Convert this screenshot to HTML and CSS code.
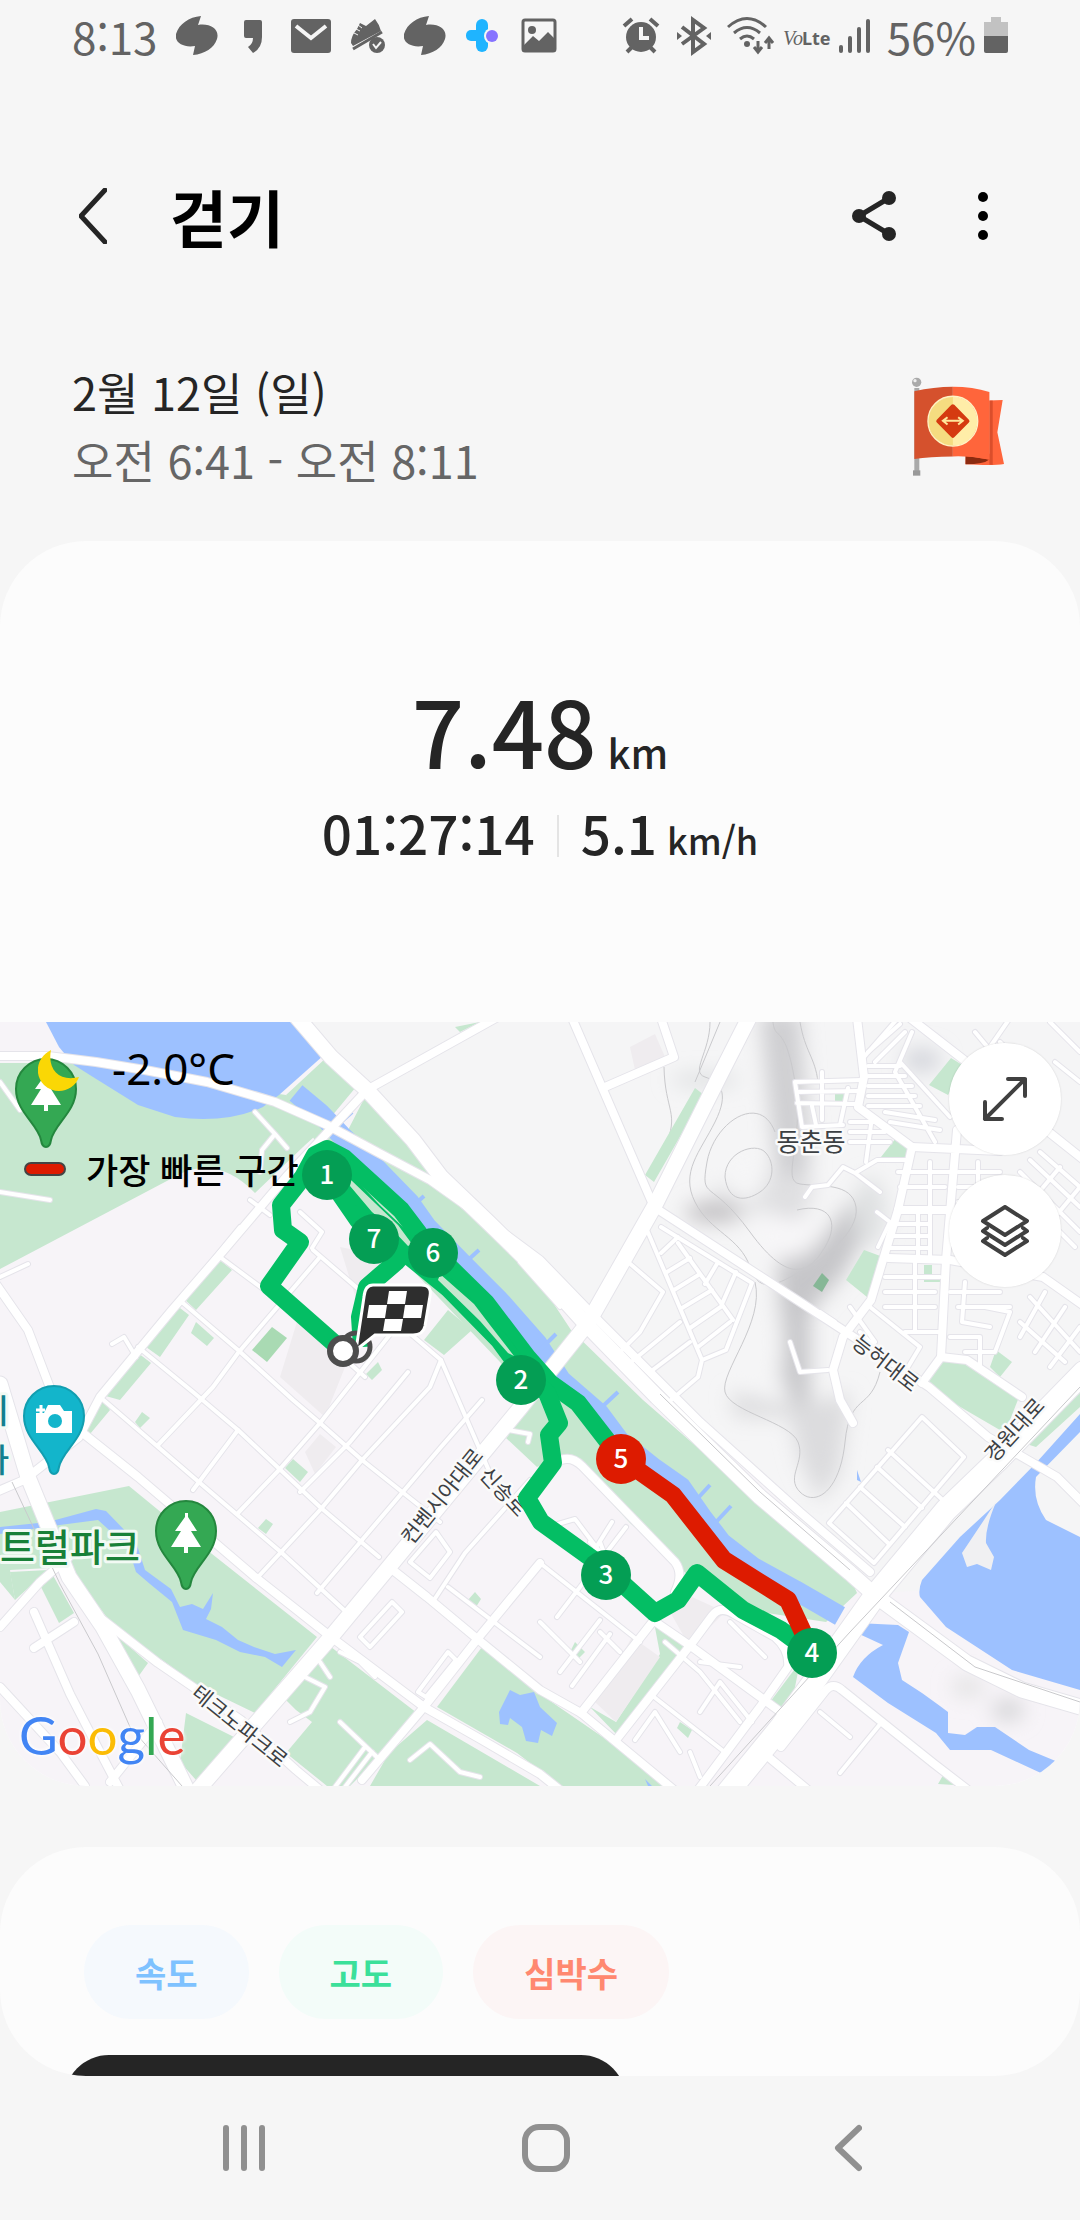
FILE: index.html
```html
<!DOCTYPE html>
<html lang="ko">
<head>
  <meta charset="UTF-8">
  <meta name="viewport" content="width=device-width, initial-scale=1.0">
  <title>걷기</title>
  <link rel="stylesheet" href="styles.css">
</head>
<body>

  <div class="status">
    <span class="time">8:13</span>
    <div class="notis">
      <svg width="42" height="40" viewBox="0 0 42 40"><path d="M25 0 22 9C34 7 44 13 41 23 38 32 29 38 17 39L19 30C8 32-2 27 0 18 3 8 13 1 25 0Z"/></svg>
      <svg width="42" height="40" viewBox="0 0 42 40"><path d="M13 4h14q2 0 2 2v15q0 11-9 16l-5-6q5-3 5-9h-7q-2 0-2-2V6q0-2 2-2Z"/></svg>
      <svg width="42" height="40" viewBox="0 0 42 40"><rect x="1" y="3" width="40" height="34" rx="3"/><path class="cut" d="m6 10 15 12 15-12" stroke-width="4"/></svg>
      <svg width="42" height="40" viewBox="0 0 42 40"><path d="M4 27q0-7 6-14l3-6 6 3 9-7q4 5 6 12L6 30Z"/><path class="cut" d="m5 16 6 3M7 12l6 3M11 9l4 3" stroke-width="1"/><path class="line" d="M6 33 35 16" stroke-width="3"/><circle cx="30" cy="29" r="8"/><path class="cut" d="m26 28 3 4 5-6" stroke-width="2"/></svg>
      <svg width="42" height="40" viewBox="0 0 42 40"><path d="M25 0 22 9C34 7 44 13 41 23 38 32 29 38 17 39L19 30C8 32-2 27 0 18 3 8 13 1 25 0Z"/></svg>
      <svg width="42" height="40" viewBox="0 0 42 40"><g class="clover"><rect x="15" y="3" width="12" height="33" rx="6"/><rect x="5" y="14" width="20" height="11" rx="5"/></g><circle cx="31" cy="20" r="8" fill="#f6f6f6"/><circle cx="31" cy="20" r="6" class="bud"/></svg>
      <svg width="42" height="40" viewBox="0 0 42 40"><rect class="line" x="5" y="4" width="32" height="31" rx="2" stroke-width="3"/><circle cx="14" cy="14" r="4"/><path d="M6 29 15 20l6 5 9-9 7 7v12H6Z"/></svg>
    </div>
    <div class="system">
      <svg width="40" height="40" viewBox="0 0 40 40"><circle cx="20" cy="21" r="15"/><path class="line" d="m3 10 8-7M37 10l-8-7M6 36l5-5M34 36l-5-5" stroke-width="4"/><path class="cut" d="M20 11v11h8" stroke-width="4"/></svg>
      <svg width="34" height="40" viewBox="0 0 34 40"><path class="line" d="m5 11 22 17-11 8V4l11 8L5 28" stroke-width="4"/><path d="M0 16v8l5-4ZM34 16v8l-5-4Z"/></svg>
      <div class="network">
        <svg width="48" height="40" viewBox="0 0 48 40"><path class="line" d="M1 11q19-17 38 0M7 17q13-11 26 0M13 23q7-6 14 0" stroke-width="3"/><circle cx="20" cy="28" r="3"/><path class="line" d="M31 25v11m-4-5 4 5 4-5M42 33V22m-4 5 4-5 4 5" stroke-width="3"/></svg>
        <svg width="48" height="40" viewBox="0 0 48 40"><text class="vo" x="0" y="29">Vo</text><text class="lte" x="19" y="29">Lte</text></svg>
        <svg width="32" height="40" viewBox="0 0 32 40"><rect x="0" y="29" width="4" height="8" rx="2"/><rect x="9" y="20" width="4" height="17" rx="2"/><rect x="18" y="11" width="4" height="26" rx="2"/><rect x="27" y="3" width="4" height="34" rx="2"/></svg>
      </div>
      <div class="power">
        <span>56%</span>
        <svg width="24" height="40" viewBox="0 0 24 40"><path class="empty" d="M7 1h10v5h7v14H0V6h7Z"/><path d="M0 20h24v15q0 2-2 2H2q-2 0-2-2Z"/></svg>
      </div>
    </div>
  </div>

  <header class="appbar">
    <button class="icon-btn" aria-label="뒤로"><svg width="28" height="56" viewBox="0 0 28 56"><path d="M26 2 2 28l24 26"/></svg></button>
    <h1>걷기</h1>
    <button class="icon-btn share" aria-label="공유"><svg width="44" height="50" viewBox="0 0 44 50"><path d="M37 7 7 25l30 18"/><circle cx="37" cy="7" r="6"/><circle cx="7" cy="25" r="6"/><circle cx="37" cy="43" r="6"/></svg></button>
    <button class="icon-btn more" aria-label="더보기"><svg width="10" height="48" viewBox="0 0 10 48"><circle cx="5" cy="5" r="5"/><circle cx="5" cy="24" r="5"/><circle cx="5" cy="43" r="5"/></svg></button>
  </header>

  <section class="when">
    <div>
      <div class="date">2월 12일 (일)</div>
      <div class="range">오전 6:41 - 오전 8:11</div>
    </div>
    <svg width="92" height="99" viewBox="155 113 277 296">
      <path d="M162 145h15v252h-15Z" fill="#aaa"/>
      <path d="M158 393h22v16h-22Z" fill="#999"/>
      <circle cx="169" cy="128" r="14" fill="#aaa"/><circle cx="164" cy="123" r="5" fill="#eee"/>
      <path d="M388 183 428 181 412 278 432 374q-30 6-116 1l1-32h71Z" fill="#ff653b"/>
      <path d="M388 183h10v193h-10Z" fill="#da4e2b"/>
      <path d="M316 350 388 360q-16 14-72 15Z" fill="#8c2b10"/>
      <path d="M162 155q58-14 116-14v210q-70 0-116 8Z" fill="#d5512d"/>
      <path d="M278 141q60 0 110 16v204q-54-12-110-10Z" fill="#ff653b"/>
      <circle cx="278" cy="245" r="74" fill="#ffeda8"/>
      <path d="M278 171a74 74 0 0 0 0 148Z" fill="#f5dc80"/>
      <circle cx="278" cy="245" r="75" fill="none" stroke="#fff3c4" stroke-width="4"/>
      <path d="m278 200 44 45-44 44-44-44Z" fill="#d53a10" stroke="#d53a10" stroke-width="12" stroke-linejoin="round"/>
      <path d="m262 233-14 11 14 11M294 233l14 11-14 11M250 244h56" fill="none" stroke="#ffe79b" stroke-width="6"/>
    </svg>
  </section>

  <section class="card workout">
    <div class="summary">
      <div class="distance">7.48<small>km</small></div>
      <div class="stats"><span>01:27:14</span><i></i><span>5.1<small>km/h</small></span></div>
    </div>

    <div class="map">
      <svg class="canvas" viewBox="0 0 1080 764" role="img" aria-label="이동 경로 지도">
        <defs>
          <filter id="soft" x="-50%" y="-50%" width="200%" height="200%"><feGaussianBlur stdDeviation="10"/></filter>
          <g id="highways">
            <path d="M196 770 331 615 389 545 521 385 588 301 654 185 719 55 750-6"/>
            <path d="M296-6 331 35 367 68 413 118 441 155 489 201 540 251 585 301 657 375 760 475 850 551 877 575 967 641 1022 668 1084 686"/>
            <path d="M0 362 28 455 69 555 103 605 138 668 188 770"/>
          </g>
          <path id="arterial" d="M728 770 781 705 815 658 877 571 946 488 998 438 1084 350"/>
          <g id="roads">
            <path d="M-4 34 48 34 96 40 145 48 207 60 275 80 327 103 379 131 430 158 482 195 540 238 600 300 700 400 800 490 870 550"/>
            <path d="M572-4 654 185 843 308 929 365 988 415 1057 455 1084 482"/>
            <path d="M367 68 286 155 224 228 172 288 100 375 79 415 24 458-4 470"/>
            <path d="M79 408 138 455 255 555 331 615 424 685 482 718 540 752 560 768"/>
            <path d="M103 598 158 641 193 665 241 698 296 748 320 768"/>
            <path d="M389 545 427 575 475 615 540 668 581 691 674 768"/>
            <path d="M372 65 496-4M-4 262 28 308 52 371M605 65 674 35 661-4"/>
            <path d="M857-4 864 55 858 85 912 125 898 188 871 278 843 315 833 348 840 378 853 401"/>
            <path d="M910-4 964 38 1050 111 1084 138M957 108 946 238 941 335 922 361M912 125 1000 129"/>
            <path d="M941 335 967 338 1022 375M888 236 950 238 1043 255 1084 284M898 188H950"/>
            <path d="M657 601 692 625 778 688M616 718 692 621 712 594Q720 583 734 592L775 615Q790 628 788 645L760 685 698 768"/>
            <path d="M781 725 826 668Q833 660 842 668L933 741 968 768M760 728 808 768M581 691 654 598"/>
            <path d="M561 438Q572 434 582 444L675 540Q684 552 675 570M424 685 479 615 540 541M362 758 424 685"/>
            <path d="M34 590 70 672 100 730 120 768M0 665 60 730 85 764M34 626 74 600M0 605 40 560 69 535M110 760 158 700"/>
          </g>
          <g id="streets">
            <path d="M220 235 282 281 365 355M183 281 238 328 293 378 320 401 362 438 440 500M138 325 193 370 238 408 320 485 379 535M100 375 193 455 282 531 344 588M313 228 441 338 496 465"/>
            <path d="M158 423 213 365 238 331 320 235M193 468 238 408M238 491 279 448 320 401 400 300M258 555 320 488 362 438 430 365 441 338M317 571 441 425 482 378M172 288 240 205M300 470 350 420 408 350"/>
            <path d="M434 578 465 531 530 458M448 565 540 635M410 540 436 510 450 530 430 556ZM360 615 392 580 402 590 370 625ZM418 670 448 630 456 638 426 675Z"/>
            <path d="M255 90 275 112 287 126M275 112 262 128 260 150M250 178 270 193M300 190 322 210 312 226M112 322 124 315 136 335M0 170 50 178M0 60 20 88M0 255 28 242"/>
            <path d="M540 541 640 620M557 595 626 505M540 600 580 640M548 505 575 497 600 530M600 520 615 560M560 650 600 598M572 664 610 612M590 520 630 560M612 500 590 535M600 610 620 630"/>
            <path d="M654 675 722 728M665 620 700 650 740 700M730 600 765 635M700 690 720 660 752 700M700 640 740 645M635 718 655 690 680 730M690 730 700 755M820 690 850 715M840 751 881 701"/>
            <path d="M829 501 922 395 964 435 874 541ZM846 481 888 521M860 465 905 505M877 445 922 486M888 428 946 481"/>
            <path d="M647 208 702 338 698 355 671 378M702 338 726 328 752 261 661 205M678 221 733 298M661 231 678 215M667 250 690 236M674 268 700 252M682 286 712 268M690 306 722 284M698 325 730 300M705 262 718 240M722 282 736 250"/>
            <path d="M795 60 862 58M795 60 802 105 843 103M797 81 858 82M797 70 858 69M822 50 822 98M848 66 840 103M812 84 816 103M805 175 812 165 828 163 843 145 855 151 877 138 908 138M864 35 898-4M855 151 880 170"/>
            <path d="M868 30 900 2M875 40 905 10M868 44H900M868 54H905M868 64H912M868 74H915M868 84H920M890 100 940 108M885 90 935 98M900 40 950 95M912 10 895 50 935 120M850 100H880M850 110H885M850 120H890M872 95 866 140"/>
            <path d="M898 150H950M900 165H945M895 202H930M892 214H930M890 226H930M930 140V236M918 190V236M885 255H940M885 270H935M885 285H935M915 240V310M905 310H941M870 285 920 325 905 350M860 310 890 340M850 285 875 320"/>
            <path d="M958 150H1000M958 165H1000M958 180H990M978 140V200M950 270H1000M958 285H1010M965 260 962 300 990 305M950 315H980V345M985 285 1010 290 995 330 965 330M1000 20 1040 60M975 10 1000 40M1010-4 990 25"/>
            <path d="M1020 150 1080 210M1030 138 1080 185M1040 130 1080 165M1015 165 1075 225M1035 175 1060 145M1055 195 1080 165M1030 275 1080 330M1020 300 1065 340M1045 270 1020 315M1065 285 1035 330M1080 305 1050 345M1050 0 1080 30M1055 40 1080 60"/>
            <path d="M548 245 572 275 560 285 520 240M628 240 663 270 640 310 615 335M625 345 680 300M650 350 690 320M790 320 800 350 828 348M820 290 835 300M877 190 890 200 878 225"/>
            <path d="M305 655 325 665 310 690 290 700M320 640 330 655M340 630 360 640 375 655M335 765 365 725M345 765 372 730M340 700 380 738M410 738 430 722 460 750 480 755M160 640 180 655M508 408 530 412 528 420"/>
          </g>
          <path id="pin" d="M0 57Q-4 57-5 50C-8 34-30 22-30-1A30 30 0 0 1 30-1C30 22 8 34 5 50Q4 57 0 57Z"/>
          <path id="tree" d="M-2 15v6h4v-6h13L5-1h6L2-15v-4h-3v4L-11-1h6L-15 15Z" fill="#fff"/>
        </defs>

        <rect width="1080" height="764" fill="#f7f4f8"/>
        <path d="M310 0H1080V560L877 571 540 251 367 68Z" fill="#f5f5f6"/>

        <!-- hills -->
        <g filter="url(#soft)">
          <path d="M760-10H800L810 130 800 210 805 380 780 360 775 140Z" fill="#cfcfd2"/>
          <path d="M780 235 820 220 850 180 870 200 845 250 810 290 810 390 790 380Z" fill="#c6c6c9"/>
          <ellipse cx="715" cy="190" rx="30" ry="10" fill="#bfbdc0"/>
          <ellipse cx="705" cy="58" rx="35" ry="6" fill="#d9dcdd"/>
          <ellipse cx="765" cy="170" rx="50" ry="20" fill="#e0e0e2"/>
          <path d="M730 370 800 385 850 370 840 450 820 480 800 440 790 395 735 395Z" fill="#dcdcde"/>
          <ellipse cx="922" cy="38" rx="20" ry="12" fill="#d4d6dc"/>
          <ellipse cx="870" cy="190" rx="16" ry="35" fill="#dfe1e2"/>
          <ellipse cx="1008" cy="688" rx="16" ry="10" fill="#d2d2d4"/>
          <ellipse cx="968" cy="665" rx="16" ry="10" fill="#e2e2e2"/>
          <ellipse cx="745" cy="155" rx="20" ry="24" fill="#f6f6f7"/>
          <ellipse cx="785" cy="215" rx="32" ry="22" fill="#f7f6f8"/>
          <ellipse cx="765" cy="320" rx="18" ry="50" fill="#f5f5f6"/>
        </g>
        <path class="contour" d="M710 0C710 30 690 50 705 55S730 70 715 100 680 150 695 180 740 215 750 245 780 260 800 250 860 210 856 185 820 165 800 162 805 120 795 60 775 20 773 0M725 155C725 130 755 120 765 130S775 160 760 170 728 180 725 155ZM755 260C765 300 720 350 725 370S790 400 798 420 785 455 800 470 840 470 845 420 870 390 880 350M800 0C805 30 815 35 818 60M664 45C665 90 680 90 665 125M797 188C830 180 840 200 825 225S790 265 750 210 700 180 707 140 760 70 775 110"/>

        <!-- parks -->
        <g fill="#c6e7cf">
          <path d="M0 41H74L286 73 327 103 303 125 255 171Q220 135 182 151L0 247Z"/>
          <path d="M327 35 356 65 331 95 348 108 365 75 382 85 410 118 430 151 540 261 571 308 643 378 781 498 850 555 857 571 826 600 760 590 690 555 630 501 580 447 561 435 537 445 506 416 530 385 500 340 400 235 350 180 310 110 286 73Z"/>
          <path d="M0 490 129 464 207 528 317 615 255 691 193 661 114 605 69 545 10 548 15 578 0 560Z"/>
          <path d="M41 565 50 548 74 591 59 601ZM114 611 148 641 138 655ZM10 550 48 548 15 578Z"/>
          <path d="M331 625 417 691 379 735 350 764H327L286 731 312 700 296 688 286 678Z"/>
          <path d="M437 685 482 625 540 672 674 764H560L517 731ZM389 731 427 698 540 764H370ZM186 691 234 715 196 758 180 740Z"/>
          <path d="M220 238 232 248 196 288 183 276ZM176 283 189 293 160 335 146 325ZM138 331 151 341 120 378 102 373ZM100 375 110 388 90 412 82 405Z"/>
          <path d="M448 288 472 308 444 333 424 318ZM196 300 214 316 207 324 191 311ZM378 340 382 348 372 358 366 352ZM293 437 308 450 300 460 285 446ZM266 497 273 502 266 512 258 506ZM142 390 150 396 140 406 135 400Z"/>
          <path d="M654 600 686 625 620 716 590 685 616 700 660 632ZM575 620 585 630 578 637 571 628ZM800 640 790 690 770 680ZM680 700 692 708 688 716 677 706ZM475 570 481 577 476 585 468 578Z"/>
          <path d="M695 66 704 73 654 160 645 153ZM951 36 964 44 948 73 929 63ZM896 116 908 126V138L881 135ZM864 228 883 235 867 275 846 258ZM941 335 965 338 1019 375 1005 411 926 365ZM1080 365V385L1036 425 1020 420ZM835 70H845V79H835ZM996 328 1012 340 1000 355 990 345ZM924 243H932V252H942V260H924ZM455 5 480 0 460 10ZM938 762 945 750 970 764Z"/>
          <path d="M272 305 287 316 267 340 252 328Z" fill="#a9dab3"/>
          <path d="M822 251 829 258 822 270 813 264Z" fill="#86b796"/>
        </g>
        <path d="M300 290 345 345 325 395 280 355ZM305 430 320 412 336 425 315 452ZM595 680 632 615 660 635 616 700ZM340 225 390 235 360 290ZM630 25 655 12 665 35 635 48ZM670 590 692 575 725 590 690 625Z" fill="#efecef"/>

        <!-- water -->
        <g fill="#9dc1ff">
          <path d="M46 0 59 25 74 43 93 55 138 83 175 95Q225 102 263 85L279 73 324 33 293 0Z"/>
          <path d="M48 500 96 487 106 489 136 520 145 548 171 567 180 585 192 582 203 587 213 571 211 587 206 597 222 605 238 618 254 625 275 632 296 628 282 645 265 635 240 630 216 618 183 608 172 580 150 562 136 550 128 525 98 498 52 504 0 512V505Z"/>
          <path d="M510 668 520 673 534 670 540 685 557 701 552 714 541 708 538 721 526 719 522 705 510 696 508 703 500 702 499 690Z"/>
          <path d="M1036 441 1000 478 960 515 922 558Q918 568 920 575L946 605 1012 648 1080 668V515L1046 498Q1032 478 1036 455L1080 410V392Z"/>
          <path d="M857 601 898 603 909 610 898 641 902 658 922 671 940 684 948 690V711L965 713 977 705H995L1029 728 1058 740 1043 752 991 728H950L936 711 888 681 853 655Q860 635 883 623L857 611Z"/>
          <path d="M857 448 861 460 857 458ZM805 489 818 502 815 503ZM645 757 652 764H648Z"/>
        </g>
        <path d="M997 478 984 498 962 531 967 545 977 542 991 548 994 535 986 521Q985 505 997 478Z" fill="#f0f0f2"/>
        <path class="canal" d="M296 71 320 91 341 113 375 145 410 181 427 205 461 240 499 278 537 321 561 358 599 391 619 418 654 446 681 465 702 495 722 521 753 545 795 568 840 594"/>
        <path class="canal-branch" d="M341 100 352 90M412 185 424 174M468 238 479 228M540 328 556 312M603 384 618 370M698 476 710 463M717 499 731 484"/>

        <!-- roads: grey casing first, then the white surface -->
        <use href="#streets" class="casing street-c"/>
        <use href="#roads" class="casing road-c"/>
        <use href="#highways" class="casing highway-c"/>
        <use href="#arterial" class="casing arterial-c"/>
        <use href="#streets" class="surface street"/>
        <use href="#roads" class="surface road"/>
        <use href="#highways" class="surface highway"/>
        <use href="#arterial" class="surface arterial"/>
        <path class="contour" d="M12 460 60 562 98 632 130 705 182 764M720 0 695 60M1080 365 850 610 710 764M660 372 760 470 850 548M890 580 975 645 1080 680"/>

        <g class="street-names">
          <text transform="translate(881 347) rotate(38)">능허대로</text>
          <text transform="translate(1020 413) rotate(-48)">경원대로</text>
          <text transform="translate(448 479) rotate(-51)">컨벤시아대로</text>
          <text transform="translate(498 475) rotate(47)">신송로</text>
          <text transform="translate(235 710) rotate(39)">테크노파크로</text>
          <text class="town" x="811" y="129">동춘동</text>
        </g>

        <text class="place park" x="0" y="539">트럴파크</text>
        <text class="place sight" x="9" y="401">이</text>
        <text class="place sight" x="9" y="450">아</text>
        <g transform="translate(46 68)"><use href="#pin" fill="#34a853" stroke="#24873e" stroke-width="2"/><use href="#tree"/></g>
        <g transform="translate(186 510)"><use href="#pin" fill="#34a853" stroke="#24873e" stroke-width="2"/><use href="#tree"/></g>
        <g transform="translate(54 395)"><use href="#pin" fill="#13b5cb" stroke="#129eb0" stroke-width="2"/><path d="M-18-4h8l4-8H6l4 6h8v22h-36Z" fill="#fff"/><path d="M-18-7h9M-13-12v9" stroke="#fff" stroke-width="3"/><circle cx="1" cy="4" r="7" fill="#13b5cb"/></g>

        <!-- walked route -->
        <path class="route" d="M343 329 269 264 300 220 283 208 281 183 303 155 315 133 327 127 344 136 401 188 429 225 486 281 527 335 550 361 578 381 609 421 622 437"/>
        <path class="route" d="M327 153 358 198 410 235 448 266 499 318 521 348 547 371 559 401 549 413 553 441 527 476 541 500 605 546 655 591 678 578 697 551 743 588 781 608 812 631"/>
        <path class="route" d="M335 148 374 190 410 224 396 240 367 265 360 295 362 325"/>
        <path class="route fast" d="M622 437 673 473 724 538 788 578 808 621"/>
        <path d="M351 158 375 181 398 203 412 222 408 224 390 205 372 190 350 164ZM440 252 474 282 490 303 514 334 508 331 480 299 438 258Z" fill="#c6e7cf"/>

        <circle cx="356" cy="325" r="14" fill="none" stroke="#4d4d4d" stroke-width="5"/>
        <path d="M373 263H421Q432 263 430 274L425 304Q423 313 413 313H375L356 328 364 275Q365 263 373 263Z" fill="#2e2e2e" stroke="#fff" stroke-width="3"/>
        <path d="M389 269h18l-2 13h-18ZM369 283h18l-2 13h-18ZM405 283h18l-2 13h-18ZM385 297h18l-2 12h-18Z" fill="#fff"/>
        <circle cx="343" cy="329" r="13" fill="#fff" stroke="#4d4d4d" stroke-width="6"/>

        <g class="laps">
          <circle cx="327" cy="153" r="25"/><text x="327" y="162">1</text>
          <circle cx="374" cy="217" r="25"/><text x="374" y="226">7</text>
          <circle cx="433" cy="231" r="25"/><text x="433" y="240">6</text>
          <circle cx="521" cy="358" r="25"/><text x="521" y="367">2</text>
          <circle cx="606" cy="553" r="25"/><text x="606" y="562">3</text>
          <circle cx="812" cy="631" r="25"/><text x="812" y="640">4</text>
          <circle class="fastest" cx="621" cy="437" r="25"/><text x="621" y="446">5</text>
        </g>
      </svg>

      <div class="weather">
        <svg width="42" height="42" viewBox="0 0 42 42"><path d="M13 0C-2 8-4 25 6 35 18 46 36 41 41 27 22 32 9 20 13 0Z" fill="#fad705"/></svg>
        <span>-2.0°C</span>
      </div>
      <div class="legend"><i></i>가장 빠른 구간</div>
      <div class="google"><span class="b">G</span><span class="r">o</span><span class="y">o</span><span class="b">g</span><span class="g">l</span><span class="r">e</span></div>
      <div class="map-tools">
        <button aria-label="지도 확대"><svg width="46" height="46" viewBox="0 0 46 46"><path d="M3 43 43 3M26 3h17v17M3 26v17h17"/></svg></button>
        <button aria-label="지도 종류"><svg width="50" height="52" viewBox="0 0 50 52"><path d="m25 2 22 14-22 14L3 16ZM7 23l-4 3 22 14 22-14-4-3M7 33l-4 3 22 14 22-14-4-3"/></svg></button>
      </div>
    </div>
  </section>

  <section class="card charts">
    <div class="chips">
      <button class="speed">속도</button>
      <button class="height">고도</button>
      <button class="heart">심박수</button>
    </div>
    <div class="toast"></div>
  </section>

  <nav class="navbar">
    <button aria-label="최근 앱"><svg width="42" height="48" viewBox="0 0 42 48"><path d="M3 4v40M21 4v40M39 4v40"/></svg></button>
    <button aria-label="홈"><svg width="48" height="48" viewBox="0 0 48 48"><rect x="3" y="3" width="42" height="42" rx="14"/></svg></button>
    <button aria-label="뒤로"><svg width="28" height="48" viewBox="0 0 28 48"><path d="M25 4 4 24l21 20"/></svg></button>
  </nav>

</body>
</html>
```
FILE: styles.css
```css
* { box-sizing: border-box; }
body {
  margin: 0;
  height: 100vh;
  display: flex;
  flex-direction: column;
  background: #f6f6f6;
  color: #252525;
  font-family: "Noto Sans CJK KR", "Noto Sans", sans-serif;
}
button {
  border: 0;
  padding: 0;
  background: none;
  font-family: inherit;
  cursor: pointer;
}
svg { display: block; }

/* status bar */
.status {
  display: flex;
  align-items: center;
  height: 72px;
  padding: 0 72px;
  color: #636363;
  font-size: 44px;
  line-height: 68px;
}
.status svg { fill: #636363; }
.status .line { fill: none; stroke: #636363; }
.status .cut { fill: none; stroke: #f6f6f6; }
.status .clover { fill: #1fb4ff; }
.status .bud { fill: #8673ff; }
.status .empty { fill: #c2c2c2; }
.time { width: 104px; }
.notis { display: flex; gap: 15px; }
.system {
  display: flex;
  align-items: center;
  gap: 16px;
  margin-left: auto;
}
.network, .power { display: flex; align-items: center; gap: 8px; }
.vo { font: italic 20px "Liberation Serif", serif; }
.lte { font: bold 18px "Noto Sans", sans-serif; }

/* title row */
.appbar {
  display: flex;
  align-items: center;
  height: 288px;
  padding: 0 92px 0 79px;
}
.appbar h1 {
  margin: 0 auto 0 63px;
  color: #000;
  font-size: 62px;
  font-weight: 700;
  line-height: 88px;
}
.icon-btn svg {
  fill: none;
  stroke: #252525;
  stroke-width: 5;
  stroke-linecap: round;
  stroke-linejoin: round;
}
.share { margin-right: 82px; }
.share circle { fill: #252525; stroke-width: 2; }
.more circle { fill: #000; stroke: none; }

.when {
  display: flex;
  justify-content: space-between;
  align-items: center;
  height: 136px;
  margin-bottom: 45px;
  padding: 0 76px 4px 72px;
  font-size: 45px;
  line-height: 68px;
}
.range { color: #666; }

/* workout card */
.card {
  background: #fcfcfc;
  border-radius: 86px;
  overflow: hidden;
}
.workout { flex: none; margin-bottom: 61px; }
.summary {
  display: flex;
  flex-direction: column;
  align-items: center;
  height: 481px;
  padding-top: 136px;
  font-weight: 500;
}
.distance { font-size: 92px; line-height: 104px; }
.distance small { margin-left: 11px; font-size: 40px; }
.stats {
  display: flex;
  align-items: baseline;
  gap: 22px;
  font-size: 53px;
  line-height: 56px;
}
.stats i { align-self: center; width: 2px; height: 42px; background: #e4e4e4; }
.stats small { margin-left: 10px; font-size: 36px; }

/* map */
.map { position: relative; }
.canvas { width: 100%; height: auto; }
.contour { fill: none; stroke: #c9c9cc; stroke-width: 1; }
.canal { fill: none; stroke: #9dc1ff; stroke-width: 20; stroke-linejoin: round; }
.canal-branch { stroke: #9dc1ff; stroke-width: 4; }
.casing, .surface { fill: none; stroke-linejoin: round; stroke-linecap: round; }
.casing { stroke: #e5e4ea; }
.surface { stroke: #fff; }
.street { stroke-width: 4; }
.street-c { stroke-width: 6; }
.road { stroke-width: 8; }
.road-c { stroke-width: 10; }
.highway { stroke-width: 15; }
.highway-c { stroke-width: 17; }
.arterial { stroke-width: 22; }
.arterial-c { stroke-width: 24; }
.route { fill: none; stroke: #04be64; stroke-width: 18; stroke-linejoin: round; }
.fast { stroke: #dd1b00; }
.laps circle { fill: #049e54; }
.laps .fastest { fill: #dd1b00; }
.laps text {
  fill: #fff;
  font-size: 26px;
  font-weight: 500;
  text-anchor: middle;
}
.street-names {
  fill: #3c4043;
  stroke: #fafafa;
  stroke-width: 5;
  stroke-linejoin: round;
  paint-order: stroke;
  font-size: 21px;
  text-anchor: middle;
}
.town { font-size: 25px; }
.place {
  stroke: #f2faf4;
  stroke-width: 6;
  stroke-linejoin: round;
  paint-order: stroke;
  font-weight: 500;
}
.park { fill: #188038; font-size: 38px; }
.sight { fill: #12808f; font-size: 33px; text-anchor: end; }

.weather {
  position: absolute;
  top: 14px;
  left: 38px;
  display: flex;
  align-items: center;
  gap: 32px;
  color: #000;
  font-family: "Noto Sans", sans-serif;
  font-size: 44px;
  line-height: 64px;
}
.weather svg { margin-top: 6px; }
.legend {
  position: absolute;
  top: 121px;
  left: 24px;
  display: flex;
  align-items: center;
  gap: 20px;
  color: #000;
  font-size: 35px;
  font-weight: 500;
  line-height: 52px;
}
.legend i {
  width: 42px;
  height: 14px;
  border: 2px solid #444;
  border-radius: 7px;
  background: #dd1b00;
}
.google {
  position: absolute;
  bottom: 19px;
  left: 19px;
  font-family: Lato, sans-serif;
  font-size: 53px;
  line-height: 64px;
  text-shadow: 0 0 4px #fff, 0 0 4px #fff;
}
.google .b { color: #4285f4; }
.google .r { color: #ea4335; }
.google .y { color: #fbbc05; }
.google .g { color: #34a853; }
.map-tools {
  position: absolute;
  top: 21px;
  right: 19px;
  display: grid;
  gap: 20px;
}
.map-tools button {
  display: grid;
  place-items: center;
  width: 112px;
  height: 112px;
  border-radius: 50%;
  background: #fff;
  box-shadow: 0 0 2px rgba(0,0,0,0.15);
}
.map-tools svg {
  fill: none;
  stroke: #404040;
  stroke-width: 4;
  stroke-linecap: round;
  stroke-linejoin: round;
}

/* charts card, cut off by the navigation bar */
.charts {
  flex: 1;
  min-height: 0;
  padding: 78px 64px 0;
}
.chips { display: flex; gap: 30px; margin: 0 20px 36px; }
.chips button {
  height: 94px;
  padding: 0 51px;
  border-radius: 47px;
  font-size: 34px;
  font-weight: 700;
}
.chips .speed { background: #f5f9fd; color: #7ec2ff; }
.chips .height { background: #f3fcf9; color: #3be09a; }
.chips .heart { background: #fcf5f5; color: #ff8870; }
.toast {
  width: 59%;
  height: 90px;
  border-radius: 45px;
  background: #252525;
}

.navbar {
  display: grid;
  grid-template-columns: repeat(3, 1fr);
  place-items: center;
  height: 144px;
  padding: 0 81px 0 93px;
}
.navbar svg {
  fill: none;
  stroke: #909090;
  stroke-width: 6;
  stroke-linecap: round;
  stroke-linejoin: round;
}
```
